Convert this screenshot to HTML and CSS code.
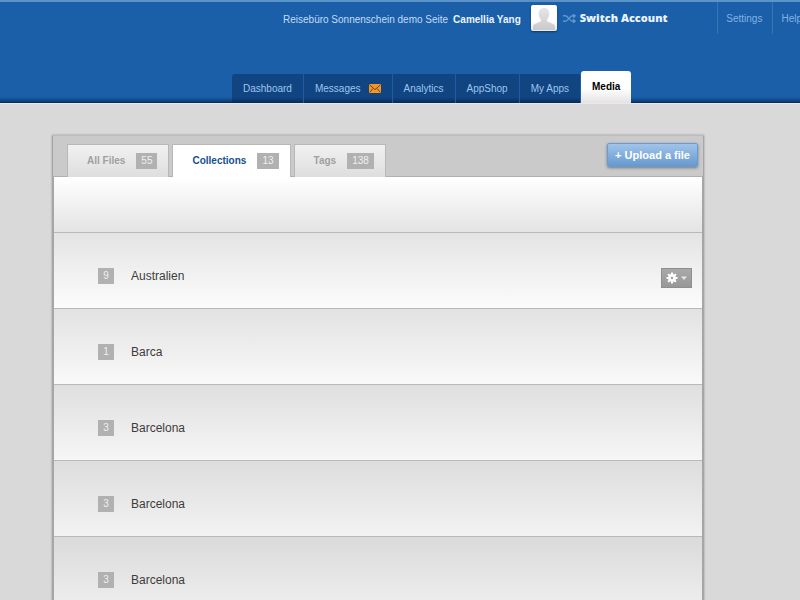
FILE: index.html
```html
<!DOCTYPE html>
<html lang="en">
<head>
<meta charset="utf-8">
<title>Media</title>
<link rel="stylesheet" href="styles.css">
</head>
<body>
<header class="header">
  <div class="account-bar">
    <div class="identity">
      <span>Reisebüro Sonnenschein demo Seite</span>
      <strong>Camellia Yang</strong>
    </div>
    <svg class="avatar" viewBox="0 0 26 26" role="img" aria-label="Profile picture">
      <defs>
        <linearGradient id="person" x1="0" y1="0" x2="0" y2="1">
          <stop offset="0" stop-color="#e6e6e6"/><stop offset="1" stop-color="#c9c9c9"/>
        </linearGradient>
      </defs>
      <path fill="url(#person)" d="M13 3c3.800 0 5.300 2.400 5.300 5.800 0 2.600-1 4.300-2 5.600-.4.600-.3 1.700.2 2.200 1.500 1.300 6.200 1.700 7.500 4.400V25H2v-4c1.300-2.700 6-3.100 7.500-4.400.5-.5.600-1.600.2-2.200-1-1.300-2-3-2-5.600C7.700 5.400 9.200 3 13 3z"/>
    </svg>
    <a class="switch" href="#">
      <svg class="shuffle" viewBox="0 0 13 9" aria-hidden="true">
        <path fill="none" stroke="#5f96d2" stroke-width="1.500" d="M0 1.800h2.200C5.500 1.800 6.500 7.200 9.500 7.200H12M0 7.200h2.200C5.500 7.200 6.500 1.800 9.500 1.800H12M10 0l2 1.800-2 1.800M10 5.400l2 1.800L10 9"/>
      </svg>
      Switch Account
    </a>
    <nav class="utility" aria-label="Account">
      <a href="#">Settings</a>
      <a href="#">Help</a>
    </nav>
  </div>
  <nav class="main-nav" aria-label="Main">
    <a href="#">Dashboard</a>
    <a href="#">Messages
      <svg class="mail" viewBox="0 0 12 9" aria-hidden="true">
        <rect width="12" height="9" rx="1" fill="#f9941e"/>
        <path fill="none" stroke="#5f4a2c" stroke-width="1" d="M.5.800L6 5.600 11.500.800M.8 8.200l3-3.600M11.200 8.200l-3-3.600"/>
      </svg>
    </a>
    <a href="#">Analytics</a>
    <a href="#">AppShop</a>
    <a href="#">My Apps</a>
    <a class="current" href="#" aria-current="page">Media</a>
  </nav>
</header>
<main class="panel">
  <div class="panel-head">
    <nav class="tabs" aria-label="Media">
      <a href="#">All Files <span class="count">55</span></a>
      <a class="active" href="#">Collections <span class="count">13</span></a>
      <a href="#">Tags <span class="count">138</span></a>
    </nav>
    <button class="upload" type="button">+ Upload a file</button>
  </div>
  <div class="content">
    <div class="toolbar"></div>
    <ul class="collections">
      <li><span class="number">9</span><span class="name">Australien</span>
        <button class="options" type="button" aria-label="Options">
          <svg viewBox="0 0 22 12" aria-hidden="true">
            <circle cx="6" cy="6" r="2.600" fill="none" stroke="#fff" stroke-width="2.600"/>
            <path stroke="#fff" stroke-width="2" d="M6 .5v2M6 9.500v2M.5 6h2M9.500 6h2M2.100 2.100l1.400 1.400M8.500 8.500l1.400 1.400M2.100 9.900l1.400-1.400M8.500 3.500l1.400-1.400"/>
            <path fill="#e6e6e6" d="M15 4.500h6l-3 3.500z"/>
          </svg>
        </button>
      </li>
      <li><span class="number">1</span><span class="name">Barca</span></li>
      <li><span class="number">3</span><span class="name">Barcelona</span></li>
      <li><span class="number">3</span><span class="name">Barcelona</span></li>
      <li><span class="number">3</span><span class="name">Barcelona</span></li>
    </ul>
  </div>
</main>
</body>
</html>
```
FILE: styles.css
```css
* { box-sizing: border-box; }

body {
  margin: 0;
  background: #d9d9d9;
  color: #3c3c3c;
  font: 12px/16px "Liberation Sans", Arial, sans-serif;
}

a { text-decoration: none; color: inherit; }
button { font-family: inherit; cursor: pointer; }

.header {
  display: flex;
  flex-direction: column;
  justify-content: space-between;
  height: 104px;
  overflow: hidden;
  white-space: nowrap;
  border-top: 2px solid #5b93c9;
  border-bottom: 1px solid #f0e4e4;
  background: linear-gradient(#1b5fa9 94%, #0f4380 98%, #04285a);
}

.account-bar {
  display: flex;
  align-items: center;
  height: 32px;
  padding-left: 283px;
  color: #c3ddf6;
  font-size: 10px;
}

.identity {
  display: flex;
  gap: 5px;
  padding-top: 4px;
}

.identity strong { color: #e9f4ff; }

.avatar {
  flex: none;
  width: 26px;
  height: 26px;
  margin-left: 10px;
  border-radius: 2px;
  background: linear-gradient(#fff 60%, #e8e8e8);
  box-shadow: 0 1px 2px #0b3566;
}

.switch {
  display: flex;
  align-items: center;
  gap: 4px;
  margin-left: 6px;
  color: #e9f4ff;
  font: 800 11px/16px "Open Sans", "Arial Black", sans-serif;
}

.shuffle { width: 13px; height: 9px; }

.utility {
  display: flex;
  margin-left: auto;
  margin-right: -12px;
  color: #82b2e3;
}

.utility a {
  height: 32px;
  padding: 0 10px 0 8px;
  border-left: 1px solid #3875b7;
  line-height: 34px;
}

.main-nav {
  display: flex;
  align-items: flex-end;
  padding-left: 232px;
  color: #9cc6f0;
  font-size: 10px;
}

.main-nav a {
  display: flex;
  align-items: center;
  gap: 8px;
  height: 29px;
  padding: 0 11px;
  border-right: 1px solid #1d5da3;
  background: linear-gradient(#114581 80%, #0a366d 92%, #04285a);
}

.main-nav a:first-child { border-top-left-radius: 3px; }
.mail { width: 12px; height: 9px; }

.main-nav .current {
  height: 32px;
  border: 0;
  border-radius: 3px 3px 0 0;
  background: linear-gradient(#fff 55%, #e3e3e3);
  color: #000;
  font-weight: bold;
}

.panel {
  margin: 31px 96px 0 52px;
  padding: 0 2px;
  border-top: 1px solid #bcbcbc;
  background: #a6a6a6;
  box-shadow: 0 0 2px #999;
}

.panel-head {
  display: flex;
  align-items: flex-end;
  justify-content: space-between;
  height: 41px;
  margin: 0 -1px;
  padding: 0 5px 0 14px;
  border-bottom: 1px solid #b0b0b0;
  background: #cacaca;
}

.tabs {
  display: flex;
  gap: 3px;
  margin-bottom: -1px;
  color: #a0a0a0;
  font-size: 10px;
  font-weight: bold;
}

.tabs a {
  display: flex;
  align-items: center;
  gap: 11px;
  height: 33px;
  padding: 0 11px 0 19px;
  border: 1px solid #b8b8b8;
  border-bottom: 0;
  background: linear-gradient(#f1f1f1, #dedede);
}

.tabs .active { background: #fff; color: #14508f; }

.count {
  padding: 0 5px;
  background: #b1b1b1;
  color: #f0f0f0;
  font-weight: normal;
}

.upload {
  align-self: flex-start;
  height: 24px;
  margin-top: 7px;
  padding: 0 7px;
  border: 1px solid #699bd0;
  border-radius: 2px;
  background: linear-gradient(#a0c4ea, #6699cf);
  box-shadow: 0 1px 3px #777;
  color: #fff;
  font-size: 11px;
  font-weight: bold;
}

.toolbar {
  height: 56px;
  border-bottom: 1px solid #b9b9b9;
  background: linear-gradient(#fff, #e4e4e4);
}

.collections { margin: 0; padding: 0; list-style: none; }

.collections li {
  display: flex;
  align-items: center;
  height: 76px;
  padding: 10px 10px 0 44px;
  border-bottom: 1px solid #b9b9b9;
  background: linear-gradient(#e4e4e4, #fcfcfc);
}

.collections li:nth-child(2) { background: linear-gradient(#e2e2e2, #f9f9f9); }
.collections li:nth-child(3) { background: linear-gradient(#dfdfdf, #f6f6f6); }
.collections li:nth-child(4) { background: linear-gradient(#dddddd, #f2f2f2); }
.collections li:nth-child(5) { background: linear-gradient(#dadada, #f0f0f0); }

.number {
  width: 16px;
  margin-right: 17px;
  background: #b1b1b1;
  color: #f0f0f0;
  font-size: 10px;
  text-align: center;
}

.options {
  display: flex;
  align-items: center;
  justify-content: center;
  width: 31px;
  height: 20px;
  margin: 4px 0 0 auto;
  padding: 0;
  border: 1px solid #8f8f8f;
  background: linear-gradient(#a9a9a9, #989898);
}

.options svg { width: 22px; height: 12px; }
```
